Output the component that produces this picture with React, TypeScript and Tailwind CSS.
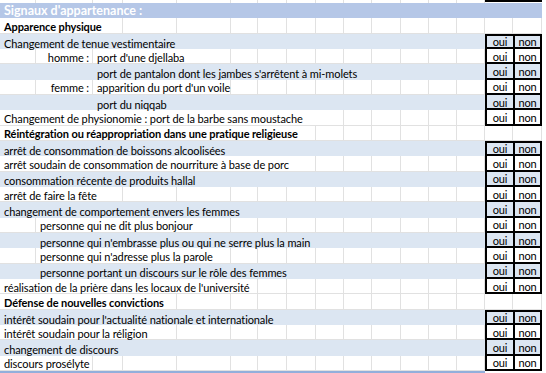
import React from 'react';

type Row = {
  text: string;
  col?: number;
  label?: string;
  end?: number;
  blue?: boolean;
  bold?: boolean;
  box?: boolean;
  first?: boolean;
};

// sheet columns A..N, then the oui / non boxes and a thin tail
const WIDTHS = [36, 57, 30, 54, 54, 27, 29, 29, 28, 28, 29, 28, 28, 28];

const rows: Row[] = [
  { text: 'Apparence physique', bold: true, end: 3 },
  { text: 'Changement de tenue vestimentaire', blue: true, box: true, first: true },
  { label: 'homme :', text: "port d'une djellaba", col: 2, end: 5, box: true },
  { text: "port de pantalon dont les jambes s'arrêtent à mi-molets", col: 2, blue: true, box: true },
  { label: 'femme :', text: "apparition du port d'un voile", col: 2, end: 5, box: true },
  { text: 'port du niqqab', col: 2, blue: true, box: true },
  { text: 'Changement de physionomie : port de la barbe sans moustache', end: 9, box: true },
  { text: 'Réintégration ou réappropriation dans une pratique religieuse', bold: true, end: 8 },
  { text: 'arrêt de consommation de boissons alcoolisées', blue: true, box: true, first: true },
  { text: 'arrêt soudain de consommation de nourriture à base de porc', end: 8, box: true },
  { text: 'consommation récente de produits hallal', blue: true, box: true },
  { text: 'arrêt de faire la fête', end: 3, box: true },
  { text: 'changement de comportement envers les femmes', blue: true, box: true },
  { text: 'personne qui ne dit plus bonjour', col: 1, end: 5, box: true },
  { text: "personne qui n'embrasse plus ou qui ne serre plus la main", col: 1, blue: true, box: true },
  { text: "personne qui n'adresse plus la parole", col: 1, end: 5, box: true },
  { text: 'personne portant un discours sur le rôle des femmes', col: 1, blue: true, box: true },
  { text: "réalisation de la prière dans les locaux de l'université", end: 6, box: true },
  { text: 'Défense de nouvelles convictions', bold: true, end: 4 },
  { text: "intérêt soudain pour l'actualité nationale et internationale", blue: true, box: true, first: true },
  { text: 'intérêt soudain pour la réligion', end: 4, box: true },
  { text: 'changement de discours', blue: true, box: true },
  { text: 'discours prosélyte', end: 2, box: true },
];

const GRID = 'grid grid-cols-[36px_57px_30px_54px_54px_27px_29px_29px_28px_28px_29px_28px_28px_28px_28px_29px_1fr]';

function span(from: number, to: number) {
  return WIDTHS.slice(from, to).reduce((a, b) => a + b, 0);
}

function Boxes({ row }: { row: Row }) {
  if (!row.box) {
    return (
      <>
        <div className="border-r border-b border-[#e1e1e1]" />
        <div className="border-r border-b border-[#e1e1e1]" />
      </>
    );
  }
  const top = row.first ? 'border-t-2' : '';
  return (
    <>
      <div className={`flex items-end justify-center pb-[0.5px] border-l-2 border-b-2 border-black ${top}`}>oui</div>
      <div className={`flex items-end justify-center pb-[0.5px] border-l-2 border-r-2 border-b-2 border-black ${top}`}>non</div>
    </>
  );
}

function SheetRow({ row }: { row: Row }) {
  const start = row.col ?? 0;
  const line = row.blue ? 'border-transparent' : 'border-[#e1e1e1] border-b';
  const end = row.blue ? 14 : row.end ?? 14;
  const cells: React.ReactNode[] = [];

  for (let i = 0; i < start; i++) {
    if (row.label && i === 1) {
      cells.push(
        <div key={i} className={`flex items-end pb-[0.5px] justify-end pr-[3px] border-r ${line}`}>
          {row.label}
        </div>
      );
    } else {
      cells.push(<div key={i} className={`border-r ${line}`} />);
    }
  }

  cells.push(
    <div
      key="text"
      className={`flex items-end pb-[0.5px] whitespace-nowrap overflow-visible pl-[4px] border-r ${line} ${row.bold ? 'font-bold' : ''}`}
      style={{ gridColumn: `span ${end - start}`, width: span(start, end) }}
    >
      {row.text}
    </div>
  );

  for (let i = end; i < 14; i++) {
    cells.push(<div key={i} className={`border-r ${line}`} />);
  }

  return (
    <div className={`${GRID} h-[15.33px] ${row.blue ? 'bg-[#dce6f2]' : 'bg-white'}`}>
      {cells}
      <Boxes row={row} />
      <div className="bg-white" />
    </div>
  );
}

export default function App() {
  return (
    <div className="w-[546px] h-[373px] overflow-hidden bg-white text-[11px] tracking-[-0.1px] text-black font-['Lato',sans-serif] leading-none">
      {/* partial row above the header */}
      <div className={`${GRID} h-[3px]`}>
        {WIDTHS.map((_, i) => (
          <div key={i} className="border-r border-[#e1e1e1]" />
        ))}
        <div className="h-[2px] bg-black" />
        <div className="h-[2px] bg-black" />
        <div />
      </div>

      <div className={`${GRID} h-[15.33px]`}>
        <div className="col-span-16 bg-[#b5c7e7] flex items-end pb-[0.5px] pl-[4px] text-[12.5px] tracking-normal font-bold text-white whitespace-nowrap">
          Signaux d'appartenance :
        </div>
        <div className="bg-white" />
      </div>

      {rows.map((row, i) => (
        <SheetRow key={i} row={row} />
      ))}

      <div className={`${GRID} h-[2px]`}>
        <div className="col-span-14 bg-[#93afdb]" />
      </div>
    </div>
  );
}
